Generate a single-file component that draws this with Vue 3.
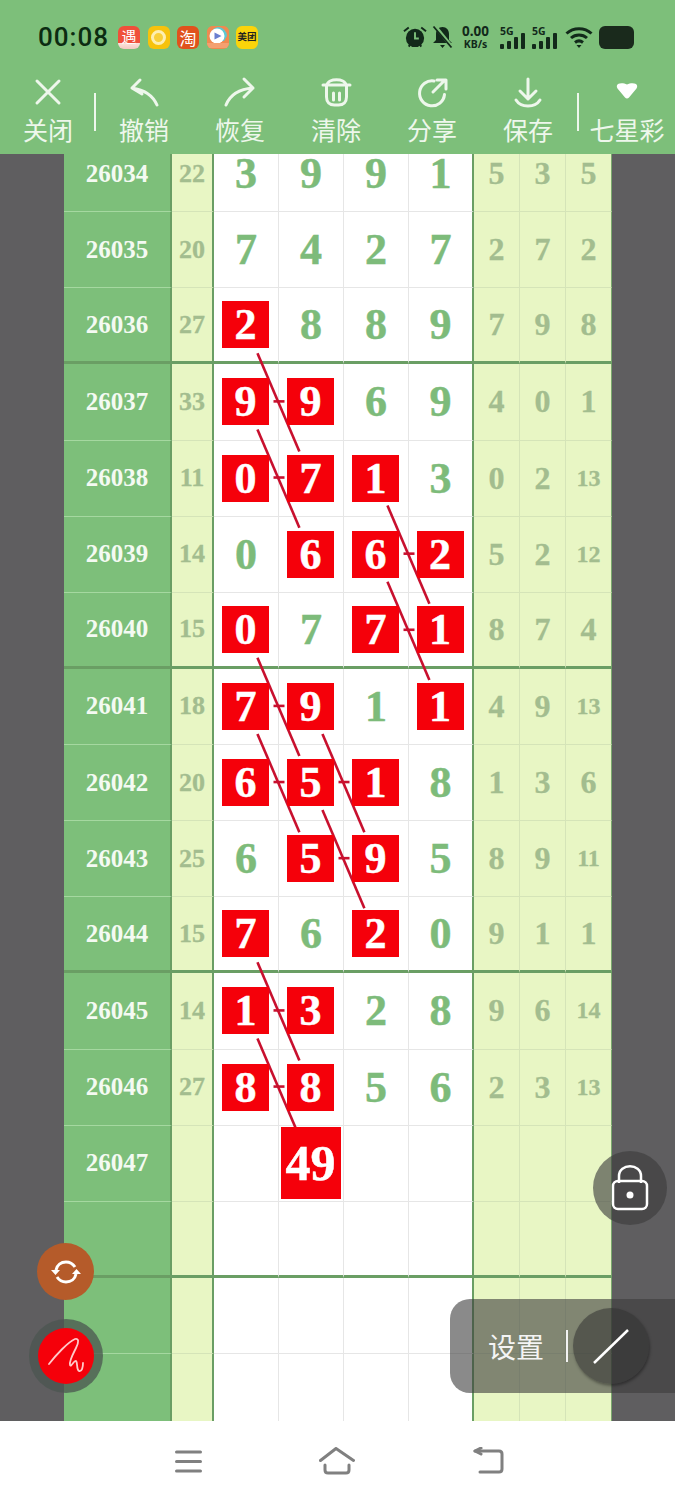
<script setup>
const raw = [
  [26034, 22, ['3', '9', '9', '1'], '', [5, 3, 5]],
  [26035, 20, ['7', '4', '2', '7'], '', [2, 7, 2]],
  [26036, 27, ['2', '8', '8', '9'], '0', [7, 9, 8]],
  [26037, 33, ['9', '9', '6', '9'], '01', [4, 0, 1]],
  [26038, 11, ['0', '7', '1', '3'], '012', [0, 2, 13]],
  [26039, 14, ['0', '6', '6', '2'], '123', [5, 2, 12]],
  [26040, 15, ['0', '7', '7', '1'], '023', [8, 7, 4]],
  [26041, 18, ['7', '9', '1', '1'], '013', [4, 9, 13]],
  [26042, 20, ['6', '5', '1', '8'], '012', [1, 3, 6]],
  [26043, 25, ['6', '5', '9', '5'], '12', [8, 9, 11]],
  [26044, 15, ['7', '6', '2', '0'], '02', [9, 1, 1]],
  [26045, 14, ['1', '3', '2', '8'], '01', [9, 6, 14]],
  [26046, 27, ['8', '8', '5', '6'], '01', [2, 3, 13]],
  [26047, '', ['', '49', '', ''], '1', ['', '', '']],
  ['', '', ['', '', '', ''], '', ['', '', '']],
  ['', '', ['', '', '', ''], '', ['', '', '']],
  ['', '', ['', '', '', ''], '', ['', '', '']]
]
const rows = raw.map((r, i) => ({
  id: r[0],
  sum: r[1],
  main: r[2].map((v, c) => ({ v, hit: r[3].includes(String(c)), big: v.length > 1 })),
  side: r[4].map(v => ({ v, small: v > 9 })),
  thick: (i + 2) % 4 === 0 && i > 0
}))

const cx = c => 245.5 + 65 * c
const cy = i => 173 + 76.13 * i
const seg = (c1, r1, c2, r2) => {
  const x1 = cx(c1)
  const y1 = cy(r1 - 34)
  const x2 = cx(c2)
  const y2 = cy(r2 - 34)
  const span = Math.max(Math.abs(x2 - x1), Math.abs(y2 - y1))
  const a = 28 / span
  const b = 1 - 26 / span
  return {
    x1: x1 + (x2 - x1) * a,
    y1: y1 + (y2 - y1) * a,
    x2: x1 + (x2 - x1) * b,
    y2: y1 + (y2 - y1) * b
  }
}
const lines = [
  seg(0, 36, 1, 38), seg(0, 37, 1, 39), seg(0, 37, 1, 37), seg(0, 38, 1, 38),
  seg(2, 38, 3, 40), seg(2, 39, 3, 39), seg(2, 39, 3, 41), seg(2, 40, 3, 40),
  seg(0, 40, 1, 42), seg(0, 41, 1, 41), seg(0, 41, 1, 43), seg(1, 41, 2, 43),
  seg(0, 42, 1, 42), seg(1, 42, 2, 42), seg(1, 42, 2, 44), seg(1, 43, 2, 43),
  seg(0, 44, 1, 46), seg(0, 45, 1, 45), seg(0, 45, 1, 47), seg(0, 46, 1, 46)
]
</script>

<template>
  <div class="page">
    <header class="head">
      <div class="status">
        <span class="time">00:08</span>
        <div class="apps">
          <span class="app a1">遇</span>
          <span class="app a2"><i></i></span>
          <span class="app a3">淘</span>
          <span class="app a4">
            <svg viewBox="0 0 22 22" width="22" height="22"><path d="M0 0h22v22H0z" fill="#f08a50"/><path d="M11 1a9 9 0 0 1 9 9l-3 5H7a8 8 0 0 1 4-14z" fill="#5cc8d0"/><circle cx="10" cy="10" r="7.500" fill="#fff"/><path d="M7.500 6.500 14.500 10l-7 3.500z" fill="#6a7fd0"/><path d="M0 17h22v5H0z" fill="#f4a070"/></svg>
          </span>
          <span class="app a5">美团</span>
        </div>
        <div class="sys">
          <svg class="s-alarm" width="24" height="24" viewBox="0 0 25 24" fill="#12291a">
            <circle cx="12.500" cy="13" r="9.500"/>
            <path d="M1 6l5-4M24 6l-5-4M6 22l2-3M19 22l-2-3" stroke="#12291a" stroke-width="2" fill="none"/>
            <path d="M12.500 7v6.500h4" stroke="#7dbf7a" stroke-width="2" fill="none"/>
          </svg>
          <svg class="s-bell" width="21" height="24" viewBox="0 0 21 24" fill="#12291a">
            <path d="M10.500 2c4 0 6.500 3 6.500 7v6l3 3H1l3-3V9c0-4 2.500-7 6.500-7zM8 20h5l-2.500 3z"/>
            <path d="M3 1l17 21" stroke="#7dbf7a" stroke-width="3.500"/>
            <path d="M1.500 1.500l18 21" stroke="#12291a" stroke-width="1.800"/>
          </svg>
          <span class="speed"><b>0.00</b><b class="unit">KB/s</b></span>
          <span class="sig"><em>5G</em><i class="b1"></i><i class="b2"></i><i class="b3"></i><i class="b4"></i></span>
          <span class="sig"><em>5G</em><i class="b1"></i><i class="b2"></i><i class="b3"></i><i class="b4"></i></span>
          <svg class="s-wifi" width="28" height="24" viewBox="0 0 28 24" fill="none" stroke="#12291a" stroke-width="3">
            <path d="M1.500 8.500c7-6.500 18-6.500 25 0M6 13c4.500-4 11.500-4 16 0M10 17.500c2.500-2 5.500-2 8 0"/>
            <path d="M11.500 20h5L14 23z" fill="#12291a" stroke="none"/>
          </svg>
          <span class="batt"></span>
        </div>
      </div>
      <nav class="tools">
        <div class="tool">
          <svg width="48" height="40" viewBox="0 0 48 40"><path d="M13 6l22 22M35 6L13 28"/></svg>
          <span>关闭</span>
          <i class="bar"></i>
        </div>
        <div class="tool">
          <svg width="48" height="40" viewBox="0 0 48 40"><path d="M37 30C33 21 26 15 12 13M20 5l-8 8 10 6"/></svg>
          <span>撤销</span>
        </div>
        <div class="tool">
          <svg width="48" height="40" viewBox="0 0 48 40"><path d="M10 30c4-10 14-16 27-17M28 4l9 9-9 9"/></svg>
          <span>恢复</span>
        </div>
        <div class="tool">
          <svg width="48" height="40" viewBox="0 0 48 40"><path d="M11 10h27M15 10C16 3 33 3 34 10M14.500 10v12c0 5 3 8 8 8h4c5 0 8-3 8-8V10M21.500 18v7M27.500 18v7"/></svg>
          <span>清除</span>
        </div>
        <div class="tool">
          <svg width="48" height="40" viewBox="0 0 48 40"><path d="M26 6A12.500 12.500 0 1 0 36.500 19.500M25 17L37 5M29 5h9v9"/></svg>
          <span>分享</span>
        </div>
        <div class="tool">
          <svg width="48" height="40" viewBox="0 0 48 40"><path d="M24 4v20M16 16l8 8 8-8M12 25c5 8 19 8 24 0"/></svg>
          <span>保存</span>
        </div>
        <div class="tool last">
          <svg width="48" height="40" viewBox="0 0 48 40"><path class="solid" d="M15 9c2-1 6-1 9 .5 3-1.500 7-1.500 9-.5 1.500 1 1.500 3 .5 4.500l-7.500 9c-1 1.200-3 1.200-4 0l-7.500-9c-1-1.500-1-3.500.5-4.500z"/></svg>
          <span>七星彩</span>
          <i class="bar start"></i>
        </div>
      </nav>
    </header>

    <main class="board">
      <div class="rows">
        <div v-for="(row, i) in rows" :key="i" class="row" :class="{ thick: row.thick }">
          <div class="id">{{ row.id }}</div>
          <div class="sum">{{ row.sum }}</div>
          <div v-for="(m, c) in row.main" :key="c" class="num">
            <span v-if="m.hit" class="hit" :class="{ big: m.big }">{{ m.v }}</span>
            <template v-else>{{ m.v }}</template>
          </div>
          <div v-for="(s, c) in row.side" :key="c" class="side" :class="{ small: s.small }">{{ s.v }}</div>
        </div>
      </div>
      <svg class="links" width="675" height="1267" viewBox="0 154 675 1267">
        <line v-for="(l, i) in lines" :key="i" :x1="l.x1" :y1="l.y1" :x2="l.x2" :y2="l.y2" />
      </svg>

      <button class="fab sync">
        <svg width="34" height="34" viewBox="0 0 34 34" fill="none" stroke="#fff" stroke-width="3">
          <path d="M7 15c1-5 5-8 10-8 4 0 7 2 9 5M27 19c-1 5-5 8-10 8-4 0-7-2-9-5"/>
          <path d="M2 15h9l-4.500 5zM32 19h-9l4.500-5z" fill="#fff" stroke="none"/>
        </svg>
      </button>
      <div class="pen-ring">
        <button class="fab pen">
          <svg width="56" height="56" viewBox="0 0 56 56" fill="none" stroke="#ffc9c9" stroke-width="1.800" stroke-linecap="round">
            <path d="M11 36C18 27 30 14 37 11c4-1 4 3 1 9-3 6-7 13-6 17 1 3 4-5 6-4 2 2 0 8 3 10 3 1 4-4 4-8"/>
          </svg>
        </button>
      </div>
      <button class="lock">
        <svg width="38" height="50" viewBox="0 0 38 50" fill="none" stroke="#fff" stroke-width="2.500">
          <path d="M8 20V13C8 0 30 0 30 13v7"/>
          <rect x="2" y="18" width="34" height="28" rx="5"/>
          <circle cx="19" cy="32" r="3.500" fill="#fff" stroke="none"/>
        </svg>
      </button>
      <div class="panel">
        <span class="panel-text">设置</span>
        <i class="panel-bar"></i>
        <button class="slash">
          <svg width="40" height="40" viewBox="0 0 40 40"><path d="M3 37L37 4" stroke="#fff" stroke-width="2.500"/></svg>
        </button>
      </div>
    </main>

    <footer class="nav">
      <svg width="30" height="26" viewBox="0 0 30 26" fill="none" stroke="#808080" stroke-width="3" stroke-linecap="round">
        <path d="M3.500 4h24M3.500 13.500h24M3.500 23h24"/>
      </svg>
      <svg width="36" height="28" viewBox="0 0 36 28" fill="none" stroke="#808080" stroke-width="3" stroke-linecap="round" stroke-linejoin="round">
        <path d="M1.500 13.500L17 1.500l17.500 12M6 18v5c0 2 1 3 3 3h18c2 0 3-1 3-3v-5"/>
      </svg>
      <svg width="32" height="28" viewBox="0 0 32 28" fill="none" stroke="#808080" stroke-width="3" stroke-linecap="round" stroke-linejoin="round">
        <path d="M3 4h24c2 0 3 1 3 3v15c0 2-1 3-3 3H8"/>
        <path d="M9 1L3 4l6 3"/>
      </svg>
    </footer>
  </div>
</template>

<style scoped>
.page {
  width: 675px;
  height: 1500px;
  display: flex;
  flex-direction: column;
  overflow: hidden;
  background: #fff;
  font-family: "Noto Sans CJK SC", "Noto Sans", sans-serif;
}

.head {
  height: 154px;
  background: #7dbf7a;
  flex: none;
  display: flex;
  flex-direction: column;
}
.status {
  height: 72px;
  display: flex;
  align-items: center;
  padding: 2px 41px 0 38px;
  box-sizing: border-box;
}
.time {
  font: 500 26px Roboto, sans-serif;
  letter-spacing: 1px;
  color: #0c2c12;
  width: 80px;
}
.apps {
  display: flex;
  gap: 7.500px;
}
.app {
  width: 22px;
  height: 23px;
  border-radius: 6px;
  display: flex;
  align-items: center;
  justify-content: center;
  font-size: 15px;
  line-height: 1;
  color: #fff;
  overflow: hidden;
}
.a1 { background: linear-gradient(#f0503a 75%, #fbe3da 75%, #f5c8c0); padding-bottom: 3px; box-sizing: border-box; }
.a2 { background: #f7c20c; }
.a2 i {
  width: 15px;
  height: 15px;
  border-radius: 50%;
  background: #f8cf3a;
  border: 3px solid #fdeeb0;
  box-sizing: border-box;
}
.a3 { background: #e0521c; font-size: 17px; }
.a4 { background: #ef8a4e; }
.a5 { background: #fbd40a; color: #222; font-size: 9.500px; font-weight: 700; }
.sys {
  margin-left: auto;
  display: flex;
  align-items: center;
  color: #12291a;
}
.s-bell { margin-left: 5px; }
.speed {
  display: flex;
  flex-direction: column;
  align-items: center;
  width: 31px;
  margin-left: 7px;
  font-family: "Noto Sans", sans-serif;
  line-height: 1;
  font-size: 13.500px;
}
.speed b { font-weight: 700; }
.speed .unit { font-size: 10.500px; margin-top: 0; }
.sig {
  position: relative;
  width: 26px;
  height: 24px;
  margin-left: 6px;
  display: flex;
  align-items: flex-end;
  gap: 2.600px;
}
.speed + .sig { margin-left: 9px; }
.sig em {
  position: absolute;
  left: 0;
  top: -1px;
  font: 700 10.500px "Noto Sans", sans-serif;
}
.sig i { width: 4.400px; background: #12291a; border-radius: 1px; }
.sig .b1 { height: 5px; }
.sig .b2 { height: 8px; }
.sig .b3 { height: 12px; }
.sig .b4 { height: 16px; }
.s-wifi { margin-left: 7px; }
.batt {
  width: 35px;
  height: 23px;
  background: #1a2a1c;
  border-radius: 6px;
  margin-left: 6px;
  filter: blur(.4px);
}

.tools {
  display: flex;
  flex: 1;
}
.tool {
  flex: 0 0 96px;
  position: relative;
  display: flex;
  flex-direction: column;
  align-items: center;
  color: #eef7ec;
}
.tool.last {
  flex: 1;
  padding-left: 3px;
}
.tool svg {
  margin-top: 3px;
  fill: none;
  stroke: #eef7ec;
  stroke-width: 3;
  stroke-linecap: round;
  stroke-linejoin: round;
}
.tool .solid { fill: #fff; stroke: none; }
.tool span {
  font-size: 25px;
  line-height: 36px;
  margin-top: -4px;
  white-space: nowrap;
}
.bar {
  position: absolute;
  top: 21px;
  right: 0;
  width: 2px;
  height: 38px;
  background: #eef7ec;
}
.bar.start { right: auto; left: 1px; }

.board {
  position: relative;
  flex: none;
  height: 1267px;
  overflow: hidden;
  background: #5f5e60;
}
.rows {
  margin: -18px 0 0 64px;
  width: 548px;
}
.row {
  display: grid;
  grid-template-columns: 108px 42px 65px 65px 65px 65px 46px 46px 46px;
  height: 76.130px;
  font-family: "Liberation Serif", serif;
  font-weight: 700;
}
.row > div {
  box-sizing: border-box;
  display: flex;
  align-items: center;
  justify-content: center;
  border-bottom: 1.500px solid #e6e6e6;
}
.row > .id {
  background: #7dbf7a;
  color: #f4faf2;
  font-size: 25px;
  border-right: 2px solid #6a9e64;
  border-bottom-color: #a5d8a0;
}
.row > .sum {
  background: #e8f6c4;
  color: #a3bd8f;
  font-size: 26px;
  border-right: 2px solid #6a9e64;
  border-bottom-color: #d5e4b8;
  -webkit-text-stroke: .3px currentColor;
}
.num {
  background: #fff;
  color: #7dbb7a;
  font-size: 44px;
  border-right: 1px solid #e6e6e6;
  -webkit-text-stroke: .5px currentColor;
}
.row > .num:nth-child(6) { border-right: 2px solid #6a9e64; }
.row > .side {
  background: #e8f6c4;
  color: #a3bd8f;
  font-size: 32px;
  border-right: 1px solid #d5e4b8;
  border-bottom-color: #d5e4b8;
  -webkit-text-stroke: .3px currentColor;
}
.row > .side.small { font-size: 24px; }
.row > .side:last-child { border-right-color: #7aa86e; }
.row.thick > div {
  border-bottom: 3px solid #6a9e64;
}
.hit {
  position: relative;
  z-index: 2;
  width: 47px;
  height: 47px;
  background: #f5000a;
  color: #fff;
  display: flex;
  align-items: center;
  justify-content: center;
  margin-right: 1px;
  -webkit-text-stroke: .5px #fff;
}
.hit.big {
  width: 60px;
  height: 72px;
  font-size: 50px;
}
.links {
  position: absolute;
  z-index: 1;
  left: 0;
  top: 0;
  pointer-events: none;
}
.links line {
  stroke: #c8102e;
  stroke-width: 2.600;
}

.fab {
  border: 0;
  padding: 0;
  border-radius: 50%;
  display: flex;
  align-items: center;
  justify-content: center;
}
.sync, .pen-ring, .lock, .panel { z-index: 3; }
.sync {
  position: absolute;
  left: 37px;
  top: 1089px;
  width: 57px;
  height: 57px;
  background: #b55b2a;
}
.pen-ring {
  position: absolute;
  left: 29px;
  top: 1165px;
  width: 74px;
  height: 74px;
  border-radius: 50%;
  background: rgba(75, 85, 80, .75);
  display: flex;
  align-items: center;
  justify-content: center;
}
.pen {
  width: 56px;
  height: 56px;
  background: #f5000a;
  margin: 0 1px 0 0;
}
.lock {
  position: absolute;
  left: 593px;
  top: 997px;
  width: 74px;
  height: 74px;
  border: 0;
  border-radius: 50%;
  background: rgba(60, 60, 60, .62);
  display: flex;
  align-items: center;
  justify-content: center;
  padding: 0;
}
.panel {
  position: absolute;
  left: 450px;
  top: 1145px;
  width: 225px;
  height: 94px;
  border-radius: 20px 0 0 20px;
  background: rgba(60, 60, 60, .6);
  display: flex;
  align-items: center;
  color: #fff;
}
.panel-text {
  margin-left: 38px;
  font-size: 28px;
  line-height: 1;
  color: #f4f4f4;
}
.panel-bar {
  width: 2px;
  height: 32px;
  background: #f2f2f2;
  margin-left: 22px;
}
.slash {
  width: 76px;
  height: 76px;
  border: 0;
  padding: 0;
  margin-left: 5px;
  border-radius: 50%;
  background: rgba(50, 50, 50, .55);
  box-shadow: 1px 2px 3px rgba(0, 0, 0, .35);
  display: flex;
  align-items: center;
  justify-content: center;
}

.nav {
  height: 79px;
  flex: none;
  background: #fff;
  display: flex;
  align-items: center;
  justify-content: center;
  gap: 116.500px;
  padding-left: 1px;
  box-sizing: border-box;
}
</style>
